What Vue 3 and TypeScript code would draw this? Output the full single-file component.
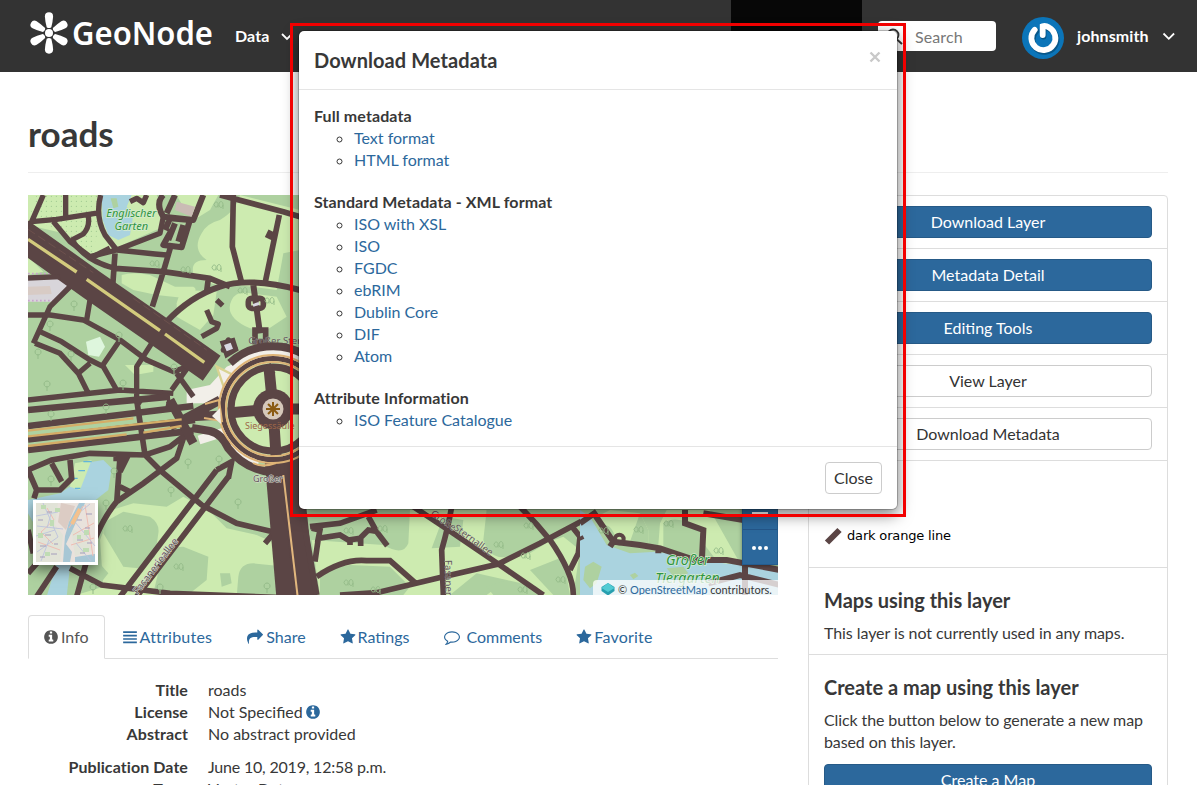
<script setup lang="ts">
interface Group { title: string; links: string[] }
interface Tab { label: string; icon: string; gap?: boolean; active?: boolean; wide?: boolean }
interface Row { label: string; value: string; info?: boolean; spaced?: boolean }

const infoPath = 'M1152 1376v-160q0-14-9-23t-23-9h-96v-512q0-14-9-23t-23-9h-320q-14 0-23 9t-9 23v160q0 14 9 23t23 9h96v320h-96q-14 0-23 9t-9 23v160q0 14 9 23t23 9h448q14 0 23-9t9-23zm-128-896v-160q0-14-9-23t-23-9h-192q-14 0-23 9t-9 23v160q0 14 9 23t23 9h192q14 0 23-9t9-23zm640 416q0 209-103 385.5t-279.5 279.5-385.5 103-385.5-103-279.5-279.5-103-385.5 103-385.5 279.5-279.5 385.5-103 385.5 103 279.5 279.5 103 385.5z'
const starPath = 'M1728 647q0 22-26 48l-363 354 86 500q1 7 1 20 0 21-10.5 35.5t-30.5 14.5q-19 0-40-12l-449-236-449 236q-22 12-40 12-21 0-31.5-14.5t-10.5-35.5q0-6 2-20l86-500-364-354q-25-27-25-48 0-37 56-46l502-73 225-455q19-41 49-41t49 41l225 455 502 73q56 9 56 46z'
const sharePath = 'M1792 640q0 26-19 45l-512 512q-19 19-45 19t-45-19-19-45v-256h-224q-98 0-175.5 6t-154 21.5-133 42.5-105.5 69.5-80 101-48.5 138.5-17.5 181q0 55 5 123 0 6 2.5 23.5t2.5 26.5q0 15-8.5 25t-23.5 10q-16 0-28-17-7-9-13-22t-13.5-30-10.5-24q-127-285-127-451 0-199 53-333 162-403 875-403h224v-256q0-26 19-45t45-19 45 19l512 512q19 19 19 45z'
const barsPath = 'M128 256h1536v192h-1536zM128 640h1536v192h-1536zM128 1024h1536v192h-1536zM128 1408h1536v192h-1536z'
const commentPath = 'M896 384q-204 0-381.5 69.5t-282 187.5-104.5 255q0 112 71.5 213.5t201.5 175.5l87 50-27 96q-24 91-70 172 152-63 275-171l43-38 57 6q69 8 130 8 204 0 381.5-69.5t282-187.5 104.5-255-104.5-255-282-187.5-381.5-69.5zm896 512q0 174-120 321.5t-326 233-450 85.5q-70 0-145-8-198 175-460 242-49 14-114 22h-5q-15 0-27-10.5t-16-27.5v-1q-3-4-.5-12t2-10 4.5-9.5l6-9 7-8.5 8-9q7-8 31-34.5t34.5-38 31-39.5 32.5-51 27-59 26-76q-157-89-247.5-220t-90.5-281q0-174 120-321.5t326-233 450-85.5 450 85.5 326 233 120 321.5z'

const tabs: Tab[] = [
  { label: 'Info', icon: infoPath, active: true },
  { label: 'Attributes', icon: barsPath, wide: true },
  { label: 'Share', icon: sharePath },
  { label: 'Ratings', icon: starPath },
  { label: 'Comments', icon: commentPath, gap: true },
  { label: 'Favorite', icon: starPath, wide: true },
]
const rows: Row[] = [
  { label: 'Title', value: 'roads' },
  { label: 'License', value: 'Not Specified', info: true },
  { label: 'Abstract', value: 'No abstract provided' },
  { label: 'Publication Date', value: 'June 10, 2019, 12:58 p.m.', spaced: true },
  { label: 'Type', value: 'Vector Data' },
]
const actions = [
  { label: 'Download Layer', primary: true },
  { label: 'Metadata Detail', primary: true },
  { label: 'Editing Tools', primary: true },
  { label: 'View Layer', primary: false },
  { label: 'Download Metadata', primary: false },
]
const groups: Group[] = [
  { title: 'Full metadata', links: ['Text format', 'HTML format'] },
  { title: 'Standard Metadata - XML format', links: ['ISO with XSL', 'ISO', 'FGDC', 'ebRIM', 'Dublin Core', 'DIF', 'Atom'] },
  { title: 'Attribute Information', links: ['ISO Feature Catalogue'] },
]
// Tree symbols scattered over the wooded areas, in map coordinates.
const trees = [
  [74, 305], [50, 325], [38, 353], [71, 355], [47, 385], [119, 336], [174, 368], [123, 384], [51, 415], [106, 408],
  [188, 463], [219, 460], [238, 503], [51, 480], [171, 491], [114, 472], [267, 587], [106, 504], [160, 588], [93, 588],
]
const leafTrees = [
  [220, 205], [156, 264], [187, 270], [218, 268], [271, 301], [244, 291], [129, 529], [180, 567],
  [350, 531], [384, 529], [350, 583], [377, 590], [500, 545], [527, 556], [530, 526], [562, 580], [640, 530], [670, 524], [720, 551], [524, 590], [605, 531],
]
</script>

<template>
  <div class="page">
    <header class="navbar">
      <svg class="logo" width="186" height="48" viewBox="28 10 186 48">
        <g fill="#fff">
          <path v-for="a in 6" :key="a" :transform="`rotate(${a * 60} 49 33)`" d="M46.700 27.200Q45.100 21 44.900 16.400A4.100 4.100 0 0 1 53.100 16.400Q52.900 21 51.300 27.200Q49 29 46.700 27.200Z" />
          <circle cx="49" cy="33" r="5" fill="#333" />
          <circle cx="49" cy="33" r="4" />
          <text class="logo-text" x="72" y="45" textLength="141" lengthAdjust="spacingAndGlyphs">GeoNode</text>
        </g>
      </svg>
      <nav class="menu">
        <span>Data</span>
        <svg width="12" height="8" viewBox="0 0 12 8"><path d="M1 1l5 5 5-5" fill="none" stroke="#fff" stroke-width="1.8" /></svg>
        <span class="maps">Maps</span>
        <span class="about">About</span>
      </nav>
      <div class="language">English</div>
      <div class="search">
        <svg width="18" height="18" viewBox="0 0 18 18"><circle cx="7" cy="7" r="5.5" fill="none" stroke="#333" stroke-width="1.8" /><path d="M11 11.5l5 4.5" stroke="#333" stroke-width="2" /></svg>
        <span>Search</span>
      </div>
      <svg class="avatar" width="42" height="42" viewBox="0 0 42 42">
        <circle cx="21" cy="21" r="21" fill="#0b75b9" />
        <g fill="none" stroke-linecap="round">
          <path d="M13.500 12.500A12 12 0 1 0 27 10.500Q23.500 8.200 20.700 9.200V18" transform="translate(.8 1.500)" stroke="#075789" stroke-width="6" />
          <path d="M12.700 12.800A12 12 0 1 0 27 10.500Q23.500 8.200 20.700 9.200V18" stroke="#fff" stroke-width="5.8" />
        </g>
      </svg>
      <span class="user">johnsmith</span>
      <svg width="14" height="9" viewBox="0 0 14 9"><path d="M1.5 1.5l5.3 5.3 5.3-5.3" fill="none" stroke="#fff" stroke-width="1.8" /></svg>
    </header>

    <main>
      <h2>roads</h2>
      <div class="columns">
        <section class="left">
          <div class="map">
            <svg class="map-art" width="750" height="400" viewBox="28 195 750 400">
              <defs>
                <symbol id="tree" viewBox="0 0 8 12" overflow="visible"><path d="M4 11V6M4 7A3 3 0 1 1 4.100 7" fill="none" stroke="#94bb89" stroke-width="1" /></symbol>
                <symbol id="leaves" viewBox="0 0 10 12" overflow="visible"><path d="M3 8.500V4.500A2 2.500 0 1 0 3 6.500M8 10V5A2 3 0 1 0 8 6" fill="none" stroke="#94bb89" stroke-width=".9" /></symbol>
                <pattern id="dots" width="15" height="15" patternUnits="userSpaceOnUse"><circle cx="4" cy="4" r="1.700" fill="#98c58b" /></pattern>
              </defs>
              <rect x="28" y="195" width="750" height="400" fill="#aed1a0" />

              <!-- north-west quarter -->
              <g transform="translate(20 190) scale(.33333)">
                <g fill="#cdebb0">
                  <path d="M24 15H410L435 75 420 115 340 150 275 180 215 207 130 130 24 105Z" />
                  <path d="M470 15H595L570 60 530 85 500 70Z" />
                  <path d="M545 130Q560 100 600 90Q650 60 660 15L840 60V180L790 190 770 300 655 285Q580 300 520 250Q510 210 560 210Q515 180 545 130Z" />
                  <path d="M305 255Q340 245 390 255L465 290 520 290Q540 300 500 325L410 315 340 300 305 280Z" />
                  <path d="M470 340Q480 300 500 300L590 305 580 375 540 420 470 380Z" />
                  <path d="M635 330Q650 300 690 310L770 320 800 380 740 420 690 415Q610 380 635 330Z" />
                  <path d="M315 525L400 525 400 545 345 555ZM24 200L70 245 24 255Z" />
                </g>
                <path d="M50 15H240L230 140 215 205 115 115 24 95Z" fill="url(#dots)" />
                <path d="M245 15H335L320 50 340 75 330 135 295 150 265 135 248 90Z" fill="#aad3df" />
                <path d="M272 25L290 25 295 50 280 55Z" fill="#aed1a0" />
                <path d="M24 260L115 260 145 280 115 335 24 335Z" fill="#d8d5da" />
                <path d="M24 290L90 288 95 312 24 315Z" fill="#d8cbc5" />
                <path d="M24 251H105M24 332H100" stroke="#c9a4ce" stroke-width="5" stroke-dasharray="5 7" />
                <path d="M198 455L240 440 255 470 237 500 205 495Z" fill="#def6dd" />
                <path d="M500 600L570 585 620 530 690 500V640H500Z" fill="#f2efe9" />
                <path d="M590 530L640 555 618 610Z" fill="#f2efe9" stroke="#d8d391" stroke-width="7" />
                <g fill="none" stroke="#5b4545" stroke-width="14" stroke-linejoin="round">
                  <path d="M70 15L35 95 110 88 240 68M137 15V80M100 95L150 155 210 200 290 180 420 130 430 80M205 80Q210 110 190 132L155 150M242 15Q225 80 255 135L290 180 405 192 440 195" stroke-width="16" />
                  <path d="M155 150Q200 215 285 235L430 245 570 265 630 290M285 190L278 290M210 205L270 175M430 245L452 170M430 245L397 350M565 265L560 305M640 15L637 170 665 278M778 75L735 280M600 15L790 65 840 80" stroke-width="17" />
                  <path d="M740 130L765 142" stroke-width="25" />
                  <path d="M440 395Q510 320 600 290T840 300M700 285L720 430M455 120L430 165 485 172 510 90 450 85 435 120M440 70L465 15M430 15Q405 40 430 80L520 90 550 15M465 100L445 150M490 105L475 155" stroke-width="18" />
                  <path d="M330 35L350 25 370 38 380 15M625 450L645 475 610 480ZM590 330L608 347M560 360L575 395 595 402 590 415 545 440" stroke-width="16" />
                  <path d="M155 285L90 350 40 460M24 375H90L190 390 300 450 380 510 460 545 500 530M210 330L200 390M60 425L125 455 210 510 250 530 290 600M45 460L120 490 175 550 205 610M300 450L245 530M395 460L350 530 350 640M210 520L175 550M24 630L300 600 460 610M505 530L455 600M470 550L520 620" stroke-width="16" />
                </g>
                <path d="M-46 98L215 284 500 482 575 535" fill="none" stroke="#5b4545" stroke-width="92" />
                <path d="M24 148L170 246M200 268L420 422M435 432L553 517" fill="none" stroke="#d3cb7d" stroke-width="10" />
                <path d="M24 118L220 248M340 325L560 480" fill="none" stroke="#765852" stroke-width="2" stroke-dasharray="25 12" />
                <path d="M24 264L120 260" stroke="#5b4545" stroke-width="16" />
                <path d="M470 35L525 50 515 80 465 60Z" fill="#cabcb5" />
                <g fill="none" stroke="#5b4545" stroke-width="17"><rect x="685" y="325" width="45" height="30" rx="10" /><path d="M705 420h32v35h-32zM610 460l28-7 8 25-25 15z" /></g>
                <path d="M698 342l18-6 2 9-18 5zM612 465l20-7 7 18-19 8z" fill="#d8d7e1" />
                <g class="place-name" text-anchor="middle" font-size="33"><text x="334" y="80">Englischer</text><text x="334" y="121">Garten</text></g>
                <text class="street" x="685" y="462" font-size="29">Großer Stern</text>
              </g>

              <!-- south-west quarter -->
              <g transform="translate(20 400) scale(.33333)">
                <path d="M275 330L340 310 440 320 490 290 565 330 620 385 710 405 765 430 790 490 840 600H120L250 560 240 420Z" fill="#cdebb0" />
                <path d="M255 365L310 335 390 350Q420 370 415 400L405 470 355 505 310 500 250 400ZM420 495Q430 440 490 440L565 470 560 540 510 580H400ZM600 520L630 520 635 550 605 560ZM655 530Q660 490 700 490L800 500V590H650ZM230 480L265 520 245 545 180 540Z" fill="#aed1a0" />
                <path d="M24 300L120 280 165 250 190 190 250 180 275 205 265 270 220 305 190 400 150 500 140 590H80L110 490 24 340Z" fill="#aad3df" />
                <path d="M165 190L215 180 180 270 150 260Z" fill="#cdebb0" />
                <path d="M190 185h25M175 212h20M155 235h18M165 265h16" stroke="#62b6dc" stroke-width="4" />
                <g fill="none" stroke="#5b4545" stroke-width="17">
                  <path d="M24 210L95 180 210 160 375 165 450 140 515 90M350 0L375 165 425 215 545 315 650 370 765 397M500 85L470 175 370 250 290 305Q235 370 195 500L170 590M24 210L50 270 120 270 155 235 150 180M95 190L125 245M50 270L42 295M280 175L320 175 300 215M300 170L290 310M300 260L330 275M150 505L245 555 450 580 840 595M24 390L40 460M24 520L130 400M110 500L50 590M765 395L735 430M445 20L450 0M350 0L365 10" />
                  <path d="M590 210L300 590M625 230L350 590M590 210L635 185 625 235" />
                  <path d="M24 30L450 -10M24 78L520 18M24 118L525 60M24 150L520 92" stroke-width="20" />
                  <path d="M450 0L520 130M450 80L600 0M515 50L700 40" stroke-width="27" />
                </g>
                <path d="M24 109L485 58M24 92L340 55M24 138L320 103M370 98L485 78" fill="none" stroke="#d5ad67" stroke-width="7" />
                <path d="M765 180L800 590" stroke="#5b4545" stroke-width="62" />
                <path d="M810 170L855 590" stroke="#5b4545" stroke-width="65" />
                <path d="M790 225L833 590" fill="none" stroke="#e2b77e" stroke-width="6" />
              </g>

              <!-- roundabout and its inner square -->
              <circle cx="273" cy="409" r="50" fill="#cdebb0" />
              <g fill="none">
                <path d="M240.300 362.300A57 57 0 0 1 305 362M258.200 464A57 57 0 0 1 221.300 433L199 440" stroke="#f2efe9" stroke-width="9" />
                <path d="M230 363A63 63 0 0 1 305 355M270 472A63 63 0 0 1 228 448Q222 434 210 431L192 428" stroke="#5b4545" stroke-width="8" />
                <circle cx="273" cy="409" r="50.500" stroke="#5b4545" stroke-width="5" />
                <circle cx="273" cy="409" r="54" stroke="#dfb477" stroke-width="2" />
                <circle cx="273" cy="409" r="47" stroke="#dfb477" stroke-width="2" />
                <circle cx="273" cy="409" r="42" stroke="#5b4545" stroke-width="7" />
                <path d="M269 370L273 368M269 368L273 409 276 455M228 413L273 409H320" stroke="#5b4545" stroke-width="11" />
                <path d="M205 404L219 400 222 421 204 418M253 463Q262 468 276 463" stroke="#dfb477" stroke-width="2" />
              </g>
              <path d="M212 416L220 408 221 424Z" fill="#f2efe9" />
              <circle cx="273" cy="409" r="20" fill="#5b4545" /><circle cx="273" cy="409" r="10.500" fill="#d6c9bb" />
              <path v-for="a in 4" :key="a" :transform="`rotate(${a * 45} 273 409)`" d="M273 402V416" stroke="#8a5b13" stroke-width="2" />
              <text class="monument" x="245" y="429">Siegessäule</text>
              <text class="street" x="253" y="482" font-size="9">Großer</text>

              <!-- southern park -->
              <g transform="translate(290 500) scale(.33333)">
                <path d="M65 120L280 135Q340 170 355 130L360 30H590L580 120Q600 180 650 170L820 110 870 150 850 285H590L650 240 560 220 480 285H90Z" fill="#cdebb0" />
                <path d="M425 145L460 50 520 60 510 140ZM590 30L720 30 800 110 720 160 600 150ZM90 210L180 195 300 200 360 260 340 285H90ZM590 260L650 240 740 260 760 285H610ZM720 210L820 170 840 285H790Z" fill="#aed1a0" />
                <g fill="none" stroke="#5b4545" stroke-width="17">
                  <path d="M60 80L150 70 260 30M65 85L90 90 85 115 150 105 175 120 210 115 235 90 265 95M85 115L75 185M180 115V135M212 110V138M235 50L260 95 292 137M80 230Q160 175 230 182H300L375 248M150 285L260 278 460 230 625 192 750 130 920 40M370 20L475 90 625 192 760 285M485 20Q475 80 455 150L460 285M690 20Q740 70 780 120 850 220 850 285M850 85L870 110 865 160 840 210" />
                </g>
                <text class="street" transform="translate(420 45) rotate(35)" font-size="29">Große</text>
                <text class="street" transform="translate(490 88) rotate(36)" font-size="29">Sternallee</text>
                <text class="street" transform="translate(465 180) rotate(89)" font-size="29">Fasanerieallee</text>
                <path d="M35 30L80 285" stroke="#5b4545" stroke-width="18" />
              </g>

              <!-- lake in the south-east -->
              <g transform="translate(580 490) scale(.33333)">
                <path d="M0 60H600V320H0Z" fill="#aed1a0" />
                <path d="M90 60L180 70 205 120 205 165 110 150 50 80ZM260 60H390L480 220 420 225 370 160 310 180 235 165 240 100Z" fill="#cdebb0" />
                <path d="M60 110Q90 90 110 150L60 130ZM250 100Q290 70 370 120V200L250 170ZM180 70L205 120V165L150 155Z" fill="#aed1a0" />
                <path d="M0 60L30 80 80 165 150 190 230 185 345 205 430 220 600 235V320H0Z" fill="#aad3df" />
                <path d="M15 230L40 215 65 230 50 280 30 295 10 270ZM260 235L310 230 325 250 285 265ZM150 255L165 248 175 258 160 268Z" fill="#aed1a0" />
                <g fill="none" stroke="#5b4545" stroke-width="18">
                  <path d="M0 100L50 65M45 75L100 155 180 165 240 175 345 210 440 210 600 240M315 60V100L370 120 365 225M0 140L5 150M385 280L480 255 600 285M495 210V320M370 70L490 90M90 170L100 155M235 170L235 190" />
                  <circle cx="118" cy="147" r="13" stroke-width="12" />
                </g>
                <g class="place-name" font-size="42"><text x="258" y="226">Großer</text><text x="226" y="279">Tiergarten</text></g>
              </g>
              <text class="street" transform="translate(138 595) rotate(-53)" font-size="10">Fasanerieallee</text>
              <use v-for="([x, y], i) in trees" :key="`t${i}`" href="#tree" :x="x - 4" :y="y - 5" width="8" height="12" />
              <use v-for="([x, y], i) in leafTrees" :key="`l${i}`" href="#leaves" :x="x - 5" :y="y - 6" width="10" height="12" />
            </svg>

            <svg class="thumb" width="65" height="65" viewBox="0 0 65 65">
              <rect width="65" height="65" fill="#fff" /><rect x="3" y="3" width="59" height="59" fill="#e9e2dc" />
              <path d="M3 3H25L22 25 30 35 27 62H3ZM38 28L53 35 59 50 42 56Z" fill="#e1e3d7" />
              <path d="M28 3L42 6 33 30 25 22Z" fill="#dcccc4" />
              <path d="M46 3L36 22 32 36 30 62H37L39 52 33 44 40 29 52 3ZM42 57L62 54V62H42Z" fill="#a8c7d5" />
              <path d="M50 6L36 28M14 8L21 20 8 32 20 44M5 42L27 50M40 35L61 23M38 45L61 38M52 5L60 56" stroke="#efbdb3" stroke-width="1" fill="none" />
              <path d="M3 16L25 12M4 26L30 29M10 3L25 37M4 52L25 37M42 22L62 46M43 43L58 61M57 4L42 16M3 36L22 30M16 40L8 61M18 14L14 28" stroke="#bcc3dc" stroke-width=".9" fill="none" />
              <path d="M47 9L39 24" stroke="#f4c18e" stroke-width="4" />
              <path d="M8 5h5v4H8zM17 20h4v6h-4zM5 33h5v5H5zM51 30h5v5h-5zM50 48h6v4h-6zM22 8h5v4h-5zM12 52h5v4h-5zM44 35h4v4h-4z" fill="#c0dcb4" />
              <path d="M5 20h5M12 35h6M7 57h5M18 54h6M44 20h5M52 28h5M44 40h6M54 43h5M14 12h5M21 44h4M53 14h6M47 53h5M7 46h6" stroke="#a49dbb" stroke-width="1" />
            </svg>
            <div class="controls"><div class="minus"><i></i></div><div class="dots"><i></i><i></i><i></i></div></div>
            <div class="attribution">
              <svg width="14" height="14" viewBox="0 0 14 14"><path d="M7 1L13.500 5V9L7 13.500 .500 9V5Z" fill="#279faf" /><path d="M7 1L13.500 6 7 10 .500 6Z" fill="#51cbd3" /></svg>
              <span>© <a>OpenStreetMap</a> contributors.</span>
            </div>
          </div>

          <nav class="tabs">
            <a v-for="tab in tabs" :key="tab.label" class="tab" :class="{ active: tab.active, gap: tab.gap, wide: tab.wide, narrow: tab.icon !== sharePath && tab.icon !== commentPath }">
              <svg width="16" height="16" viewBox="0 0 1792 1792"><path :d="tab.icon" fill="currentColor" /></svg><span>{{ tab.label }}</span>
            </a>
          </nav>
          <dl>
            <div v-for="row in rows" :key="row.label" class="row" :class="{ spaced: row.spaced }">
              <dt>{{ row.label }}</dt>
              <dd>{{ row.value }} <svg v-if="row.info" width="16" height="16" viewBox="0 0 1792 1792"><path :d="infoPath" fill="#2c689c" /></svg></dd>
            </div>
          </dl>
        </section>

        <aside>
          <div v-for="a in actions" :key="a.label" class="item"><button class="btn" :class="{ primary: a.primary }">{{ a.label }}</button></div>
          <div class="item legend">
            <svg width="18" height="18" viewBox="0 0 18 18"><path d="M3 15.500L15.500 3" stroke="#5b4545" stroke-width="6" /></svg>
            <span>dark orange line</span>
          </div>
          <div class="item"><h4>Maps using this layer</h4><p>This layer is not currently used in any maps.</p></div>
          <div class="item"><h4>Create a map using this layer</h4><p class="hint">Click the button below to generate a new map based on this layer.</p><button class="btn primary create">Create a Map</button></div>
        </aside>
      </div>
    </main>

    <div class="modal">
      <div class="modal-header">
        <h4>Download Metadata</h4>
        <svg width="12" height="12" viewBox="0 0 12 12"><path d="M1.5 1.5l9 9M10.5 1.5l-9 9" stroke="#c9c9c9" stroke-width="2.400" /></svg>
      </div>
      <div class="modal-body">
        <div v-for="g in groups" :key="g.title" class="group">
          <strong>{{ g.title }}</strong>
          <ul><li v-for="l in g.links" :key="l"><a>{{ l }}</a></li></ul>
        </div>
      </div>
      <div class="modal-footer"><button class="btn close">Close</button></div>
    </div>
    <div class="outline"></div>
  </div>
</template>

<style>
html, body { overflow: hidden; }
</style>

<style scoped>
* { box-sizing: border-box; }
.page { position: relative; width: 1197px; height: 785px; overflow: hidden; background: #fff; color: #383838; font: 16px/22px Lato, sans-serif; }
h2, h4, p, ul, dl, dd { margin: 0; padding: 0; }
a { color: #2c689c; }
svg { display: block; flex: none; }

.navbar { display: flex; align-items: center; height: 72px; background: #333; color: #fff; font-weight: 700; padding: 0 0 0 28px; }
.logo { margin-top: -4px; }
.logo-text { font: 600 33px "Noto Sans", "Open Sans", sans-serif; }
.menu { display: flex; align-items: center; width: 517px; padding-left: 21px; letter-spacing: .1px; }
.menu svg { margin: 2px 0 0 12px; }
.maps { margin-left: 30px; }
.about { margin-left: 50px; }
.language { width: 131px; height: 72px; padding: 25px 14px; background: #070707; }
.search { display: flex; align-items: center; width: 118px; height: 30px; margin-left: 16px; padding: 2px 0 0 8px; border-radius: 4px; background: #fff; color: #777; font-weight: 400; gap: 11px; letter-spacing: .1px; }
.avatar { margin: 4px 13px 0 26px; }
.user { width: 85px; letter-spacing: .1px; }

main { padding: 0 29px 0 28px; }
h2 { height: 101px; padding-top: 41px; border-bottom: 1px solid #eee; font-size: 35px; line-height: 40px; font-weight: 700; }
.columns { display: flex; justify-content: space-between; margin-top: 22px; }
.left { width: 750px; }
.map { position: relative; height: 400px; overflow: hidden; }
.place-name { font-family: "Noto Sans", sans-serif; font-style: italic; font-weight: 400; fill: #2e9442; paint-order: stroke; stroke: #d9ecd0; stroke-width: 4px; }
.street { font-family: "Noto Sans", sans-serif; fill: #5f5757; paint-order: stroke; stroke: #dedfd5; stroke-width: 1px; }
.monument { font: 9px "Noto Sans", sans-serif; fill: #9d6648; }
.thumb { position: absolute; left: 5px; top: 305px; box-shadow: 0 5px 12px rgba(0, 0, 0, .5); }
.controls { position: absolute; right: 0; top: 299px; width: 36px; height: 71px; background: #2c689c; border: 1px solid #245c8e; box-shadow: 0 1px 4px rgba(0, 0, 0, .4); }
.minus { display: flex; align-items: flex-end; justify-content: center; height: 35px; border-bottom: 1px solid #245688; padding-bottom: 14px; }
.minus i { width: 16px; height: 3px; background: #fff; }
.dots { display: flex; align-items: center; justify-content: center; gap: 2px; height: 35px; padding-top: 1px; }
.dots i { width: 4px; height: 4px; border-radius: 50%; background: #fff; }
.attribution { position: absolute; right: 0; bottom: 0; display: flex; width: 185px; height: 15px; padding: 2px 0 0 8px; gap: 3px; border-radius: 4px 0 0; background: rgba(255, 255, 255, .75); font-size: 11px; line-height: 15px; white-space: nowrap; }

.tabs { display: flex; height: 44px; margin-top: 20px; border-bottom: 1px solid #ddd; }
.tab { display: flex; height: 44px; margin-right: 3px; padding: 10px 15px; border: 1px solid transparent; border-radius: 4px 4px 0 0; }
.tab svg { margin: 3px 3px 0 0; }
.tab.narrow svg { margin: 3px 2px 0 -1px; }
.tab.gap svg { margin-right: 6px; }
.tab.wide { letter-spacing: .22px; }
.tab.active { margin-right: 2px; color: #555; background: #fff; border-color: #ddd #ddd #fff; }
dl { padding-top: 20px; }
.row { display: flex; gap: 20px; }
.row.spaced { margin-top: 11px; }
.row.spaced dd { letter-spacing: -.2px; }
dt { width: 160px; text-align: right; font-weight: 700; letter-spacing: .08px; }
dd svg { display: inline-block; margin-left: -2px; vertical-align: -2px; }

aside { width: 360px; height: 640px; border: 1px solid #ddd; border-radius: 4px 4px 0 0; }
.item { padding: 10px 15px; border-bottom: 1px solid #ddd; }
.btn { display: block; width: 100%; height: 32px; padding: 0; border: 1px solid #ccc; border-radius: 4px; background: #fff; color: #333; font: 16px/22px Lato, sans-serif; }
.btn.primary { color: #fff; background: #2c689c; border-color: #265a87; }
.item h4 { margin: 11px 0 11px; font-size: 20px; line-height: 22px; }
.item p { letter-spacing: -.07px; }
.item .hint { letter-spacing: -.11px; }
.create { margin-top: 11px; }
.legend { display: flex; gap: 5px; height: 107px; padding-top: 66px; color: #000; font: 13px/18px "DejaVu Sans", sans-serif; letter-spacing: -.17px; }

.modal { position: absolute; left: 298px; top: 30px; width: 600px; height: 480px; border: 1px solid rgba(0, 0, 0, .2); border-radius: 6px; background: #fff; background-clip: padding-box; box-shadow: 0 5px 15px rgba(0, 0, 0, .5); }
.modal-header { display: flex; justify-content: space-between; height: 59px; padding: 18px 16px 0 15px; border-bottom: 1px solid #e5e5e5; }
.modal-header h4 { font-size: 20px; line-height: 22px; letter-spacing: .07px; }
.modal-header svg { margin-top: 2px; }
.modal-body { display: flex; flex-direction: column; gap: 20px; height: 356px; padding: 15px; }
.group ul { padding-left: 40px; list-style: circle; }
strong { display: block; font-weight: 700; letter-spacing: .1px; }
.modal-footer { display: flex; justify-content: flex-end; padding: 15px; border-top: 1px solid #e5e5e5; }
.close { width: 57px; }
.outline { position: absolute; left: 290px; top: 23px; width: 616px; height: 494px; border: 3px solid #f20000; }
</style>
